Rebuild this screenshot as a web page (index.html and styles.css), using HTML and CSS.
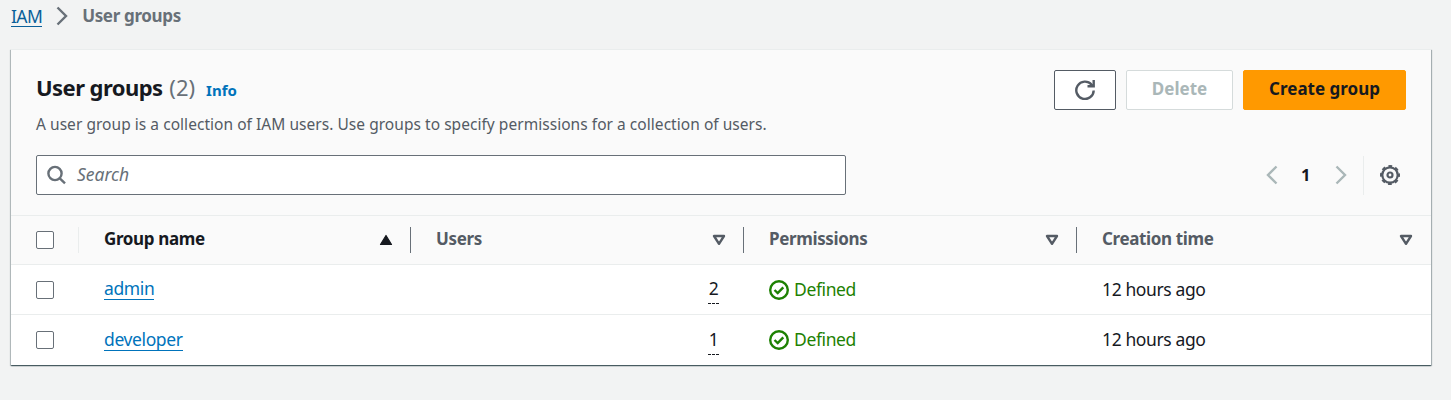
FILE: index.html
```html
<!DOCTYPE html>
<html lang="en">
<head>
<meta charset="utf-8">
<title>User groups</title>
<link rel="stylesheet" href="styles.css">
</head>
<body>
<nav class="breadcrumbs">
  <a class="link crumb-link">IAM</a>
  <svg class="crumb-sep" width="12" height="20" viewBox="0 0 12 20"><path d="M1.500 1.500l8.500 8.500-8.500 8.500"/></svg>
  <span class="crumb-current">User groups</span>
</nav>
<main class="card">
  <header class="card-header">
    <div class="title-row">
      <div class="heading">
        <h1 class="title">User groups <span class="count">(2)</span></h1>
        <a class="info">Info</a>
      </div>
      <div class="actions">
        <button class="btn btn-icon" aria-label="Refresh"><svg width="20" height="20" viewBox="0 0 20 20"><path d="M18.700 10.500A8.700 8.700 0 1 1 16.500 4.500L18 6"/><path d="M18.700 0v6.200H12.500"/></svg></button>
        <button class="btn btn-disabled">Delete</button>
        <button class="btn btn-primary">Create group</button>
      </div>
    </div>
    <p class="description">A user group is a collection of IAM users. Use groups to specify permissions for a collection of users.</p>
    <div class="tools">
      <div class="search">
        <svg width="20" height="20" viewBox="0 0 20 20"><circle cx="8" cy="8.500" r="6.600"/><path d="M12.800 13.300l5.200 5"/></svg>
        <span class="placeholder">Search</span>
      </div>
      <div class="pager">
        <svg width="12" height="20" viewBox="0 0 12 20"><path d="M10.500 1.500l-8.500 8.500 8.500 8.500"/></svg>
        <span class="page">1</span>
        <svg width="12" height="20" viewBox="0 0 12 20"><path d="M1.500 1.500l8.500 8.500-8.500 8.500"/></svg>
        <span class="pager-divider"></span>
        <svg class="gear" width="20" height="20" viewBox="0 0 20 20"><circle cx="10" cy="10" r="7.700"/><circle class="teeth" cx="10" cy="10" r="9"/><circle cx="10" cy="10" r="2.500"/></svg>
      </div>
    </div>
  </header>
  <div class="table">
    <div class="row head">
      <div class="cell select"><span class="checkbox"></span></div>
      <div class="cell sorted"><span class="label">Group name</span><svg width="14" height="12" viewBox="0 0 14 12"><path class="solid" d="M7 1.500L12.500 10.500h-11z"/></svg></div>
      <div class="cell"><span class="label">Users</span><svg width="14" height="12" viewBox="0 0 14 12"><path d="M2 2h10L7 9.800z"/></svg></div>
      <div class="cell"><span class="label">Permissions</span><svg width="14" height="12" viewBox="0 0 14 12"><path d="M2 2h10L7 9.800z"/></svg></div>
      <div class="cell"><span class="label">Creation time</span><svg width="14" height="12" viewBox="0 0 14 12"><path d="M2 2h10L7 9.800z"/></svg></div>
    </div>
    <div class="row">
      <div class="cell select"><span class="checkbox"></span></div>
      <div class="cell"><a class="link">admin</a></div>
      <div class="cell number"><span class="dashed">2</span></div>
      <div class="cell status"><svg width="20" height="20" viewBox="0 0 20 20"><circle cx="10" cy="10" r="8.800"/><path d="M5.500 10l3.200 3.100 5.600-5.800"/></svg><span class="label">Defined</span></div>
      <div class="cell"><span class="label">12 hours ago</span></div>
    </div>
    <div class="row">
      <div class="cell select"><span class="checkbox"></span></div>
      <div class="cell"><a class="link">developer</a></div>
      <div class="cell number"><span class="dashed">1</span></div>
      <div class="cell status"><svg width="20" height="20" viewBox="0 0 20 20"><circle cx="10" cy="10" r="8.800"/><path d="M5.500 10l3.200 3.100 5.600-5.800"/></svg><span class="label">Defined</span></div>
      <div class="cell"><span class="label">12 hours ago</span></div>
    </div>
  </div>
</main>
</body>
</html>
```
FILE: styles.css
```css
* { box-sizing: border-box; }
body {
  margin: 0;
  min-height: 400px;
  background: #f2f3f3;
  color: #16191f;
  font: 17.5px/24px "Noto Sans", sans-serif;
  letter-spacing: -0.38px;
}
svg { fill: none; stroke: currentColor; stroke-width: 2.4; flex: none; display: block; }
.breadcrumbs { display: flex; align-items: center; height: 32px; padding: 0 11px; color: #687078; }
.link { color: #0073bb; line-height: 20px; border-bottom: 1px solid currentColor; }
.crumb-link { color: #0a5f99; letter-spacing: -0.6px; }
.crumb-sep { margin: 0 14px; }
.crumb-current { font-weight: 700; font-size: 17px; letter-spacing: -0.35px; }
.card {
  width: 1420px;
  margin: 17px 0 0 11px;
  border-top: 1px solid #eaeded;
  background: #fff;
  box-shadow: 0 1px 1px 0 rgba(0, 28, 36, .5), 1px 1px 1px 0 rgba(0, 28, 36, .25), -1px 1px 1px 0 rgba(0, 28, 36, .2);
}
.card-header { height: 166px; padding: 20px 25px 0; background: #fafafa; border-bottom: 1px solid #eaeded; }
.title-row { display: flex; justify-content: space-between; height: 40px; }
.heading { display: flex; align-items: baseline; gap: 11px; }
.title { margin: 2px 0 0; font-size: 22px; line-height: 30px; font-weight: 700; letter-spacing: -0.55px; }
.count { margin-left: 1.5px; color: #687078; font-weight: 400; letter-spacing: 0; }
.info { color: #0073bb; font-size: 15px; font-weight: 700; letter-spacing: 0; }
.actions { display: flex; gap: 10px; }
.btn {
  display: flex; align-items: center; justify-content: center;
  height: 40px; padding: 0 0 2px; border: 1px solid #545b64; border-radius: 2px;
  background: #fff; color: #545b64; font: 700 17px/24px "Noto Sans", sans-serif;
}
.btn-icon { width: 62px; padding: 0; }
.btn-disabled { width: 107px; border-color: #d5dbdb; color: #aab7b8; }
.btn-primary { width: 163px; border-color: #ff9900; background: #ff9900; color: #16191f; }
.description { margin: 2px 0 19px; color: #545b64; font-size: 15.5px; letter-spacing: 0.04px; }
.tools { display: flex; justify-content: space-between; align-items: center; height: 40px; }
.search {
  display: flex; align-items: center; gap: 10px; width: 810px; height: 40px; padding: 0 10px;
  border: 1px solid #687078; border-radius: 2px; background: #fff; color: #687078;
}
.placeholder { font-style: italic; letter-spacing: 0; padding-bottom: 2px; }
.pager { display: flex; align-items: center; color: #aab7b8; padding-right: 6px; }
.page { width: 57px; padding-right: 2px; text-align: center; color: #16191f; font-weight: 700; font-size: 16.5px; }
.pager-divider { width: 1px; height: 39px; margin: 0 16px; background: #eaeded; }
.gear { color: #545b64; stroke-width: 2.2; }
.teeth { stroke-dasharray: 3.8 3.27; stroke-dashoffset: 1.9; stroke-width: 2; }
.row { display: grid; grid-template-columns: 68px 332px 333px 333px 354px; height: 50px; }
.row:not(:last-child) { border-bottom: 1px solid #eaeded; }
.head { height: 49px; background: #fafafa; }
.cell { display: flex; align-items: center; padding: 0 25px; }
.label { margin-bottom: 2px; }
.cell .link { line-height: 21px; margin-bottom: 1px; }
.head .cell { justify-content: space-between; padding-right: 17px; margin: 11px 0; border-right: 1px solid #687078; color: #545b64; font-weight: 700; font-size: 17px; letter-spacing: -0.36px; }
.head .cell:last-child { border-right: 0; padding-right: 18px; }
.head .select { border-right-color: #eaeded; }
.head .sorted { color: #16191f; }
.head svg { stroke-width: 2.4; stroke-linejoin: round; }
.head .solid { fill: currentColor; stroke-width: 1.2; }
.checkbox { width: 18px; height: 18px; border: 1px solid #687078; border-radius: 2px; background: #fff; }
.number { justify-content: flex-end; }
.dashed { width: 11px; text-align: center; border-bottom: 1px dashed #16191f; line-height: 26px; padding-bottom: 2px; }
.status { gap: 5px; color: #1d8102; }
```
